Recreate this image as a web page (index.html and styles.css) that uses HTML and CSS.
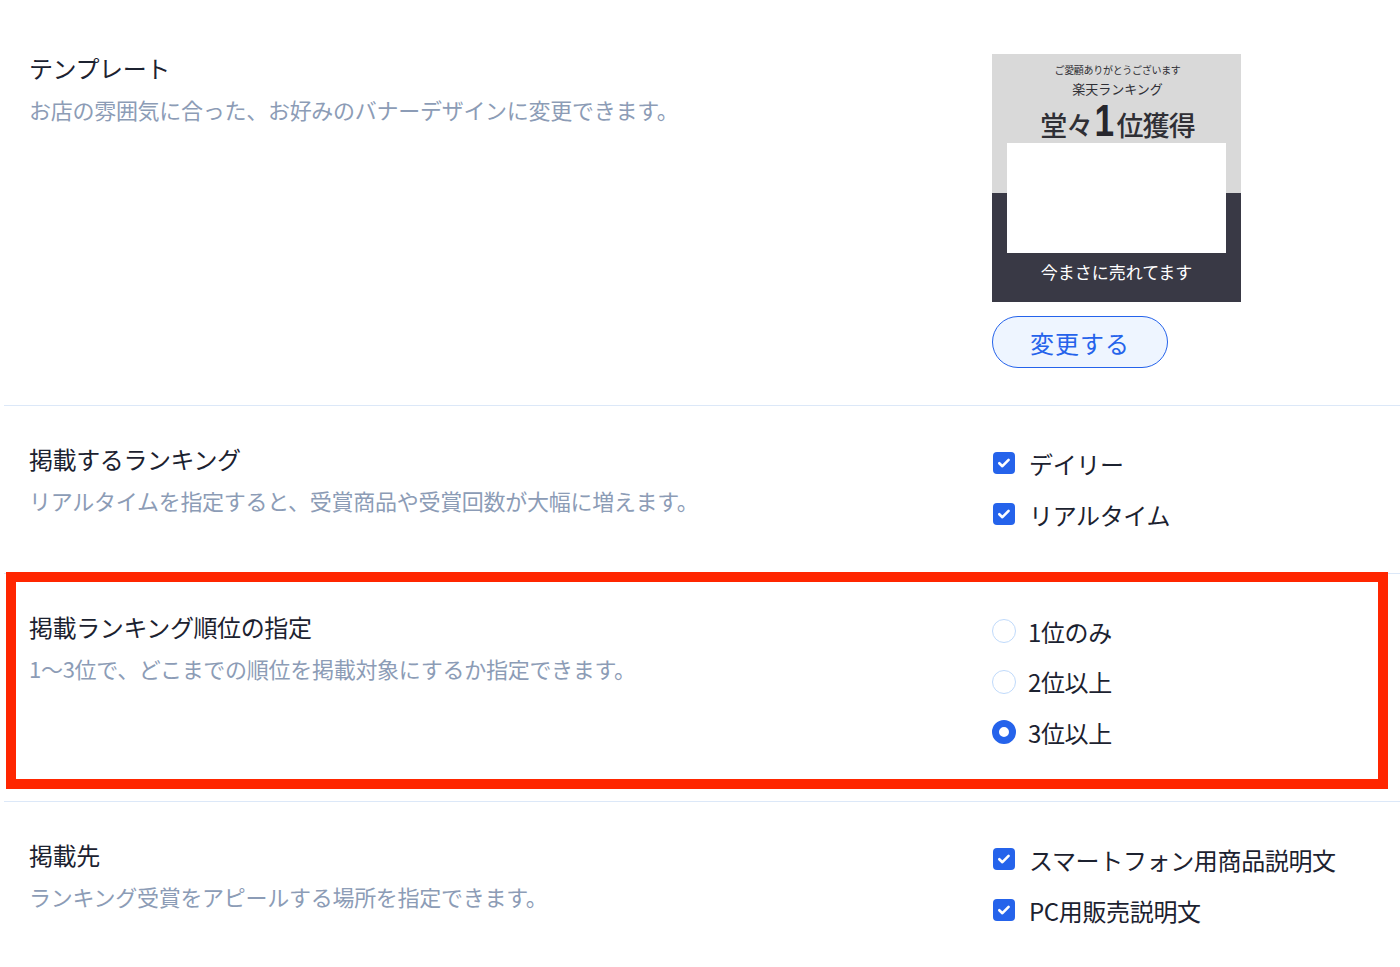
FILE: index.html
```html
<!DOCTYPE html>
<html lang="ja">
<head>
<meta charset="utf-8">
<link rel="stylesheet" href="styles.css">
</head>
<body>
<div class="page">
  <section class="row row-template">
    <div class="info">
      <h2 class="title">テンプレート</h2>
      <p class="desc">お店の雰囲気に合った、お好みのバナーデザインに変更できます。</p>
    </div>
    <div class="control">
      <div class="banner">
        <div class="b-small">ご愛顧ありがとうございます</div>
        <div class="b-mid">楽天ランキング</div>
        <div class="b-head"><span>堂々</span><span class="b-one">1</span><span>位獲得</span></div>
        <div class="b-white"></div>
        <div class="b-caption">今まさに売れてます</div>
      </div>
      <button class="btn-change">変更する</button>
    </div>
  </section>

  <section class="row row-ranking">
    <div class="info">
      <h2 class="title">掲載するランキング</h2>
      <p class="desc">リアルタイムを指定すると、受賞商品や受賞回数が大幅に増えます。</p>
    </div>
    <div class="control">
      <label class="opt"><span class="cb"><svg viewBox="0 0 22 22"><path d="M6.3 11.2l3.1 3 6.2-6.3" fill="none" stroke="#fff" stroke-width="2.6" stroke-linecap="round" stroke-linejoin="round"/></svg></span>デイリー</label>
      <label class="opt"><span class="cb"><svg viewBox="0 0 22 22"><path d="M6.3 11.2l3.1 3 6.2-6.3" fill="none" stroke="#fff" stroke-width="2.6" stroke-linecap="round" stroke-linejoin="round"/></svg></span>リアルタイム</label>
    </div>
  </section>

  <section class="row row-rank-order">
    <div class="info">
      <h2 class="title">掲載ランキング順位の指定</h2>
      <p class="desc">1〜3位で、どこまでの順位を掲載対象にするか指定できます。</p>
    </div>
    <div class="control control-radio">
      <label class="opt"><span class="radio"></span>1位のみ</label>
      <label class="opt"><span class="radio"></span>2位以上</label>
      <label class="opt"><span class="radio checked"></span>3位以上</label>
    </div>
  </section>

  <section class="row row-place">
    <div class="info">
      <h2 class="title">掲載先</h2>
      <p class="desc">ランキング受賞をアピールする場所を指定できます。</p>
    </div>
    <div class="control">
      <label class="opt"><span class="cb"><svg viewBox="0 0 22 22"><path d="M6.3 11.2l3.1 3 6.2-6.3" fill="none" stroke="#fff" stroke-width="2.6" stroke-linecap="round" stroke-linejoin="round"/></svg></span>スマートフォン用商品説明文</label>
      <label class="opt"><span class="cb"><svg viewBox="0 0 22 22"><path d="M6.3 11.2l3.1 3 6.2-6.3" fill="none" stroke="#fff" stroke-width="2.6" stroke-linecap="round" stroke-linejoin="round"/></svg></span>PC用販売説明文</label>
    </div>
  </section>

  <div class="highlight"></div>
</div>
</body>
</html>
```

FILE: styles.css
```css
* { box-sizing: border-box; }
html, body { margin: 0; padding: 0; background: #fff; }
body {
  font-family: "Noto Sans CJK JP", "Noto Sans", sans-serif;
  color: #1c2230;
  width: 1400px;
  overflow: hidden;
}
.page {
  position: relative;
  padding-top: 14px;
}
.row {
  display: flex;
  margin-left: 4px;
  padding: 36px 0 38px 25px;
  border-bottom: 1px solid #dce8f8;
}
.row-template { padding-bottom: 37px; }
.row-ranking { padding-top: 35px; padding-bottom: 41px; }
.row-rank-order { padding-top: 35px; padding-bottom: 51px; }
.row-place { padding-top: 35px; border-bottom: none; padding-bottom: 30px; }

.info { flex: 1; }
.title {
  margin: 0;
  font-size: 24px;
  line-height: 36px;
  font-weight: 400;
  letter-spacing: -0.4px;
  color: #1c2230;
}
.desc {
  margin: 7px 0 0;
  font-size: 22px;
  line-height: 33px;
  letter-spacing: -0.28px;
  color: #8c9cb6;
}
.control {
  width: 408px;
  margin-top: 4px;
  display: flex;
  flex-direction: column;
  align-items: flex-start;
  gap: 15px;
}
.control-radio { gap: 14.5px; }
.row-template .control { gap: 14px; }

.opt {
  display: flex;
  align-items: center;
  height: 36px;
  font-size: 24px;
  letter-spacing: -0.35px;
  color: #1c2230;
  gap: 14px;
}
.control-radio .opt { gap: 12px; }
.cb {
  width: 22px;
  height: 22px;
  border-radius: 4px;
  background: #2563eb;
  display: inline-flex;
  margin-left: 1px;
}
.cb svg { width: 22px; height: 22px; }
.radio {
  width: 24px;
  height: 24px;
  border-radius: 50%;
  border: 1.5px solid #c0dafb;
  background: #fff;
}
.radio.checked {
  border: 7px solid #2563eb;
}

/* banner */
.banner {
  width: 249px;
  height: 248px;
  background: linear-gradient(#d9d9d9 0, #d9d9d9 139px, #393945 139px, #393945 100%);
  display: flex;
  flex-direction: column;
  align-items: center;
  padding-top: 8px;
  color: #2f2f35;
}
.b-small {
  font-size: 10px;
  line-height: 15px;
  letter-spacing: -0.3px;
  margin-left: 2px;
}
.b-mid {
  font-size: 13px;
  line-height: 19px;
  margin-top: 2px;
  margin-left: 2px;
}
.b-head {
  height: 45px;
  display: flex;
  align-items: baseline;
  font-size: 27px;
  line-height: 45px;
  font-weight: 500;
  letter-spacing: -0.9px;
  margin-left: 2px;
}
.b-one {
  font-family: "Liberation Sans", "Noto Sans", sans-serif;
  font-size: 44px;
  font-weight: 700;
  display: inline-block;
  width: 24px;
  text-align: center;
  transform: scaleX(0.8);
  letter-spacing: 0;
  color: #26262c;
}
.b-white {
  width: 219px;
  height: 110px;
  background: #fff;
  margin-top: 0;
}
.b-caption {
  color: #ffffff;
  font-size: 17px;
  line-height: 24px;
  margin-top: 7px;
}

.btn-change {
  width: 176px;
  height: 52px;
  border: 1.5px solid #2563eb;
  border-radius: 26px;
  background: #eef5ff;
  color: #2563eb;
  font-family: "Noto Sans CJK JP", "Noto Sans", sans-serif;
  font-size: 24px;
  letter-spacing: 1px;
  padding: 0;
}

/* annotation overlay */
.highlight {
  position: absolute;
  left: 6px;
  top: 572px;
  width: 1382px;
  height: 217px;
  border: 10px solid #ff2600;
  pointer-events: none;
}
```
